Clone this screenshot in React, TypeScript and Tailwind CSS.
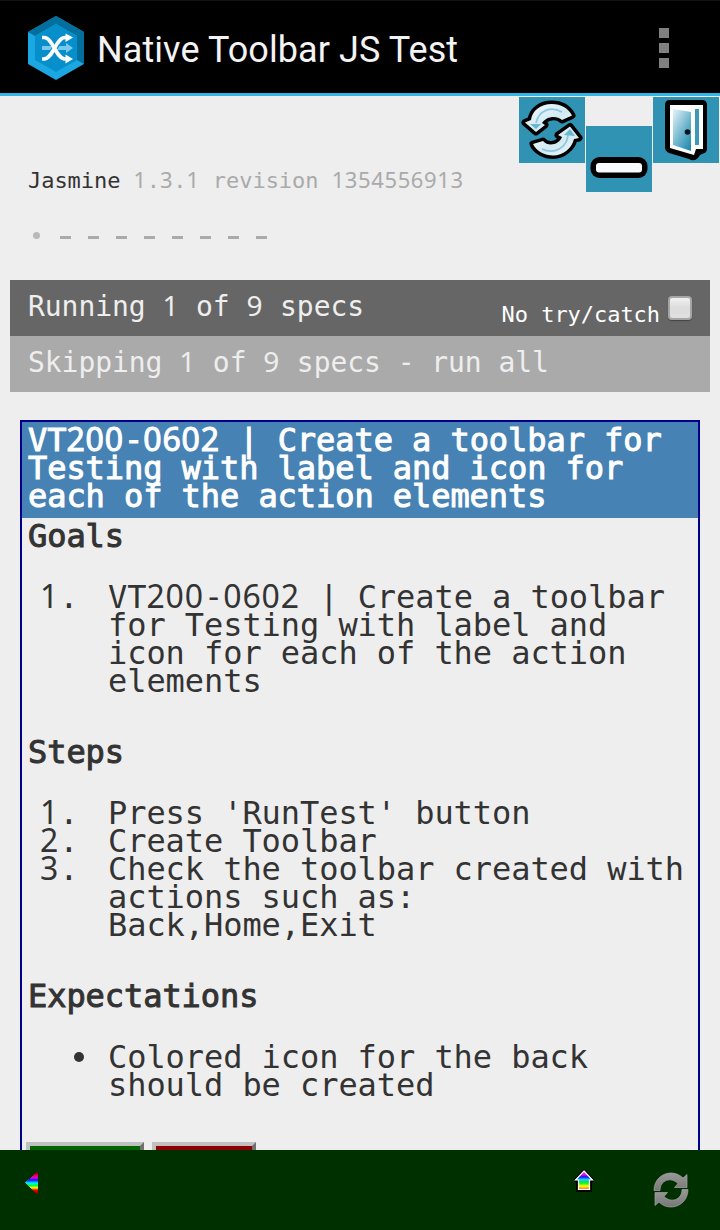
import type { ReactNode } from 'react';

const mono = "font-['Droid_Sans_Mono','DejaVu_Sans_Mono',monospace]";

// Digits use a plain zero and keep the 0.6em advance of the monospace face.
function Text({ children }: { children: string }) {
  return (
    <>
      {children.split(/(\d+)/).map((part, i) =>
        /^\d/.test(part) ? (
          <span key={i} className="font-['Noto_Sans',sans-serif] leading-[0] tracking-[0.028em]">
            {part}
          </span>
        ) : (
          part
        ),
      )}
    </>
  );
}

function AppLogo() {
  return (
    <svg width="56" height="64" viewBox="0 0 56 64" className="mt-0.5 shrink-0">
      <path d="M28 0 56 16V48L28 64 0 48V16Z" fill="#1ba8e2" />
      <path d="M0 16 28 0 56 16V48L49 44V20L28 8 7 20Z" fill="#036f9d" />
      <path d="M28 8 49 20V44L28 56 7 44V20Z" fill="#078fcb" />
      <path d="M14 30H38V27L45 32 38 37V34H14Z" fill="#78c9ed" />
      <path d="M14 43H17C25 43 28 21 38 21" fill="none" stroke="#078fcb" strokeWidth="6" />
      <path d="M14 21.500H16C25 21.500 28 43 37 43H39M14 43H16C25 43 28 21.500 37 21.500H39" fill="none" stroke="#fff" strokeWidth="3.6" />
      <path d="M37.500 17.500 45 21.500 37.500 26ZM37.500 38.500 45 43 37.500 47.500Z" fill="#fff" />
    </svg>
  );
}

const upperArrow = 'M6 25.500 12 23C13 14 21 7 33 7 42 7 49 11 53 18.500L43 23C38 18 27 19 23 26L26 28 17 35Z';
const lowerArrow = 'M60 41 55 42C53 51 44 58.500 34 58.500 26 58.500 17 54 14 47L24 44C29 50 40 48 43 40L39 38 51 29.500Z';

function RefreshTile() {
  return (
    <svg width="66" height="66" viewBox="0 0 66 66" className="block bg-[#3093b4]">
      <defs>
        <linearGradient id="arrow" x1="0" y1="0" x2="1" y2="1">
          <stop offset="0" stopColor="#f4fafc" />
          <stop offset=".55" stopColor="#d3eaf3" />
          <stop offset="1" stopColor="#f4fafc" />
        </linearGradient>
      </defs>
      <g stroke="#000" strokeWidth="7" strokeLinejoin="round" fill="#000">
        <path d={upperArrow} />
        <path d={lowerArrow} />
      </g>
      <g fill="url(#arrow)">
        <path d={upperArrow} />
        <path d={lowerArrow} />
      </g>
      <g fill="none" stroke="#8ec8de" strokeWidth="1.8">
        <path d="M17 26C20 13 32 9 43 15M23 52C36 58 48 50 49 38" />
      </g>
      <path d="M11 27 22 27 17 32ZM45 38 51 32 56 39Z" fill="#6ab6d0" />
    </svg>
  );
}

function MinimizeTile() {
  return (
    <svg width="66" height="66" viewBox="0 0 66 66" className="block bg-[#3093b4]">
      <rect x="4.500" y="31" width="57" height="21" rx="9" fill="#000" />
      <rect x="10" y="37" width="46" height="9.500" rx="3" fill="#f7fbff" />
    </svg>
  );
}

function DoorTile() {
  return (
    <svg width="66" height="66" viewBox="0 0 66 66" className="block bg-[#3093b4]">
      <defs>
        <linearGradient id="door" x1="0" y1="0" x2=".8" y2="1">
          <stop offset="0" stopColor="#e8f4f9" />
          <stop offset=".65" stopColor="#63b0cb" />
          <stop offset="1" stopColor="#2a8db0" />
        </linearGradient>
      </defs>
      <path d="M17 3H49Q54 3 54 8V52Q54 56 49 57L47 58 45 61Q41 65 36 62L16 56Q12 54 12 50V8Q12 3 17 3Z" fill="#000" />
      <path d="M17 8H50V52H43L41 58 17 51Z" fill="#fff" />
      <path d="M20 12 38 15V54L20 48Z" fill="url(#door)" />
      <path d="M42 12H46V48H42Z" fill="#3a98b8" />
      <circle cx="34.500" cy="35" r="2.800" fill="#06131a" />
    </svg>
  );
}

function RainbowBack() {
  return (
    <svg width="13" height="22" viewBox="0 0 13 22" shapeRendering="crispEdges">
      <defs>
        <linearGradient id="back" x1="0" y1="0" x2="0" y2="1">
          <stop offset="0" stopColor="#600" />
          <stop offset=".14" stopColor="#e0002a" />
          <stop offset=".26" stopColor="#e600e0" />
          <stop offset=".37" stopColor="#1414ff" />
          <stop offset=".5" stopColor="#00f0ff" />
          <stop offset=".62" stopColor="#00ff30" />
          <stop offset=".72" stopColor="#ff0" />
          <stop offset=".82" stopColor="#f20000" />
          <stop offset="1" stopColor="#700" />
        </linearGradient>
      </defs>
      <path d="M0 10.500 12 0H13V22H12Z" fill="url(#back)" />
    </svg>
  );
}

function RainbowHome() {
  return (
    <svg width="20" height="24" viewBox="0 0 20 24">
      <defs>
        <linearGradient id="home" x1="0" y1="0" x2="0" y2="1">
          <stop offset="0" stopColor="#ff3090" />
          <stop offset=".2" stopColor="#e010e0" />
          <stop offset=".32" stopColor="#1818f0" />
          <stop offset=".46" stopColor="#20c8ff" />
          <stop offset=".64" stopColor="#00f020" />
          <stop offset=".82" stopColor="#ff0" />
          <stop offset="1" stopColor="#ff5a5a" />
        </linearGradient>
      </defs>
      <path d="M10 0 20 10V13H18V23H2V13H0V10Z" fill="#000" />
      <path d="M10 2 18.500 11H15.500V20.500H4.500V11H1.500Z" fill="url(#home)" stroke="#fff" strokeWidth="1.200" />
    </svg>
  );
}

function SyncIcon() {
  return (
    <svg width="36" height="36" viewBox="0 0 36 36">
      <defs>
        <linearGradient id="sync" x1="0" y1="0" x2="0" y2="1">
          <stop offset="0" stopColor="#999" />
          <stop offset="1" stopColor="#777" />
        </linearGradient>
      </defs>
      <g fill="url(#sync)" stroke="#a5a5a5" strokeWidth=".7">
        <path d="M1 18.500C1 8 9 1 18 1 23 1 27 3 30 6L34 2.500V15.500H21.500L25 11.500C18 4.500 7 8 7 18.500Z" />
        <path d="M35 17.500C35 28 27 35 18 35 13 35 9 33 6 30L2 33.500V20.500H14.500L11 24.500C18 31.500 29 28 29 17.500Z" />
      </g>
    </svg>
  );
}

function Heading({ children }: { children: ReactNode }) {
  return <h3 className="[-webkit-text-stroke:1px_#333]">{children}</h3>;
}

function Item({ marker, lines }: { marker: ReactNode; lines: string[] }) {
  return (
    <li className="flex whitespace-nowrap">
      <span className="flex w-[80px] shrink-0 pl-3">{marker}</span>
      <div>
        {lines.map((line) => (
          <div key={line}>
            <Text>{line}</Text>
          </div>
        ))}
      </div>
    </li>
  );
}

function Ordinal({ n }: { n: number }) {
  return (
    <span>
      <Text>{`${n}.`}</Text>
    </span>
  );
}

export default function App() {
  return (
    <div className="flex h-[1230px] w-[720px] flex-col overflow-hidden bg-[#eee]">
      <header className="flex h-24 shrink-0 items-center border-t border-b-3 border-t-[#111] border-b-[#33b5e5] bg-black pl-7">
        <AppLogo />
        <h1 className="ml-[13px] pt-1.5 font-[Roboto,sans-serif] text-[36px] leading-[42px] tracking-[0.08px] whitespace-nowrap text-[#f3f3f3]">
          Native Toolbar JS Test
        </h1>
        <div className="mt-0.5 mr-[51px] ml-auto flex flex-col gap-[5px]">
          <span className="size-2.5 bg-[#808080]" />
          <span className="size-2.5 bg-[#808080]" />
          <span className="size-2.5 bg-[#808080]" />
        </div>
      </header>

      <main className={`${mono} min-h-0 flex-1 overflow-hidden`}>
        <div className="flex h-24 items-start pt-px pr-px pl-7">
          <div className="mt-[70px] text-[22px] leading-7 tracking-[-0.045px] whitespace-nowrap text-[#aaa]">
            <span className="text-[#333]">Jasmine</span>
            <Text>{' 1.3.1 revision 1354556913'}</Text>
          </div>
          <div className="ml-auto flex gap-px">
            <RefreshTile />
            <div className="pt-[29px]">
              <MinimizeTile />
            </div>
            <DoorTile />
          </div>
        </div>

        <div className="mt-7 flex h-[60px] pl-[30px]">
          <span className="flex w-7 pt-3 pl-[3px]">
            <span className="size-[7px] rounded-full bg-[#b9b9b9]" />
          </span>
          {[1, 2, 3, 4, 5, 6, 7, 8].map((n) => (
            <span key={n} className="flex w-7 pt-4 pl-0.5">
              <span className="h-[3px] w-[11px] bg-[#aaa]" />
            </span>
          ))}
        </div>

        <div className="mx-2.5 text-[28px] leading-7 tracking-[-0.057px] whitespace-nowrap text-[#eee]">
          <div className="flex h-14 bg-[#666] px-[18px]">
            <span className="pt-[13px]">
              <Text>Running 1 of 9 specs</Text>
            </span>
            <label className="ml-auto flex text-[22px] tracking-[-0.045px] text-white">
              <span className="pt-[21px]">No try/catch</span>
              <span className="mt-4 ml-2 size-6 rounded border-2 border-[#a5a5a5] bg-linear-to-b from-[#f0f0f0] via-[#dcdcdc] to-[#e0e0e0] shadow-[0_1px_1px_#444]" />
            </label>
          </div>
          <div className="h-14 bg-[#aaa] pt-[13px] pl-[18px]">
            <Text>Skipping 1 of 9 specs - run all</Text>
          </div>
        </div>

        <section className="mx-5 mt-7 border-2 border-[#00008b] text-[32px] leading-7 tracking-[-0.065px] text-[#333]">
          <h2 className="h-24 bg-[#4682b4] pt-1 pl-1.5 whitespace-nowrap text-white [-webkit-text-stroke:1px_#fff]">
            <div>
              <Text>VT200-0602 | Create a toolbar for</Text>
            </div>
            <div>Testing with label and icon for</div>
            <div>each of the action elements</div>
          </h2>
          <div className="pt-1 pl-1.5">
            <Heading>Goals</Heading>
            <ol className="mt-[33px] mb-[43px]">
              <Item
                marker={<Ordinal n={1} />}
                lines={['VT200-0602 | Create a toolbar', 'for Testing with label and', 'icon for each of the action', 'elements']}
              />
            </ol>
            <Heading>Steps</Heading>
            <ol className="mt-[33px] mb-[43px]">
              <Item marker={<Ordinal n={1} />} lines={["Press 'RunTest' button"]} />
              <Item marker={<Ordinal n={2} />} lines={['Create Toolbar']} />
              <Item marker={<Ordinal n={3} />} lines={['Check the toolbar created with', 'actions such as:', 'Back,Home,Exit']} />
            </ol>
            <Heading>Expectations</Heading>
            <ul className="mt-[33px] mb-[43px]">
              <Item
                marker={<span className="mt-[9px] ml-[34px] size-2.5 rounded-full bg-[#333]" />}
                lines={['Colored icon for the back', 'should be created']}
              />
            </ul>
          </div>
          <div className="flex gap-2 pl-1">
            <button className="h-14 w-[118px] border-4 border-t-[#c0c0c0] border-r-[#707070] border-b-[#707070] border-l-[#c0c0c0] bg-[#006400]" />
            <button className="h-14 w-[104px] border-4 border-t-[#c0c0c0] border-r-[#707070] border-b-[#707070] border-l-[#c0c0c0] bg-[#8b0000]" />
          </div>
        </section>
      </main>

      <footer className="flex h-20 shrink-0 items-start bg-[#003000] pr-[31px] pl-[25px]">
        <div className="pt-[22px]">
          <RainbowBack />
        </div>
        <div className="ml-auto pt-[19px]">
          <RainbowHome />
        </div>
        <div className="ml-[59px] pt-[22px]">
          <SyncIcon />
        </div>
      </footer>
    </div>
  );
}
